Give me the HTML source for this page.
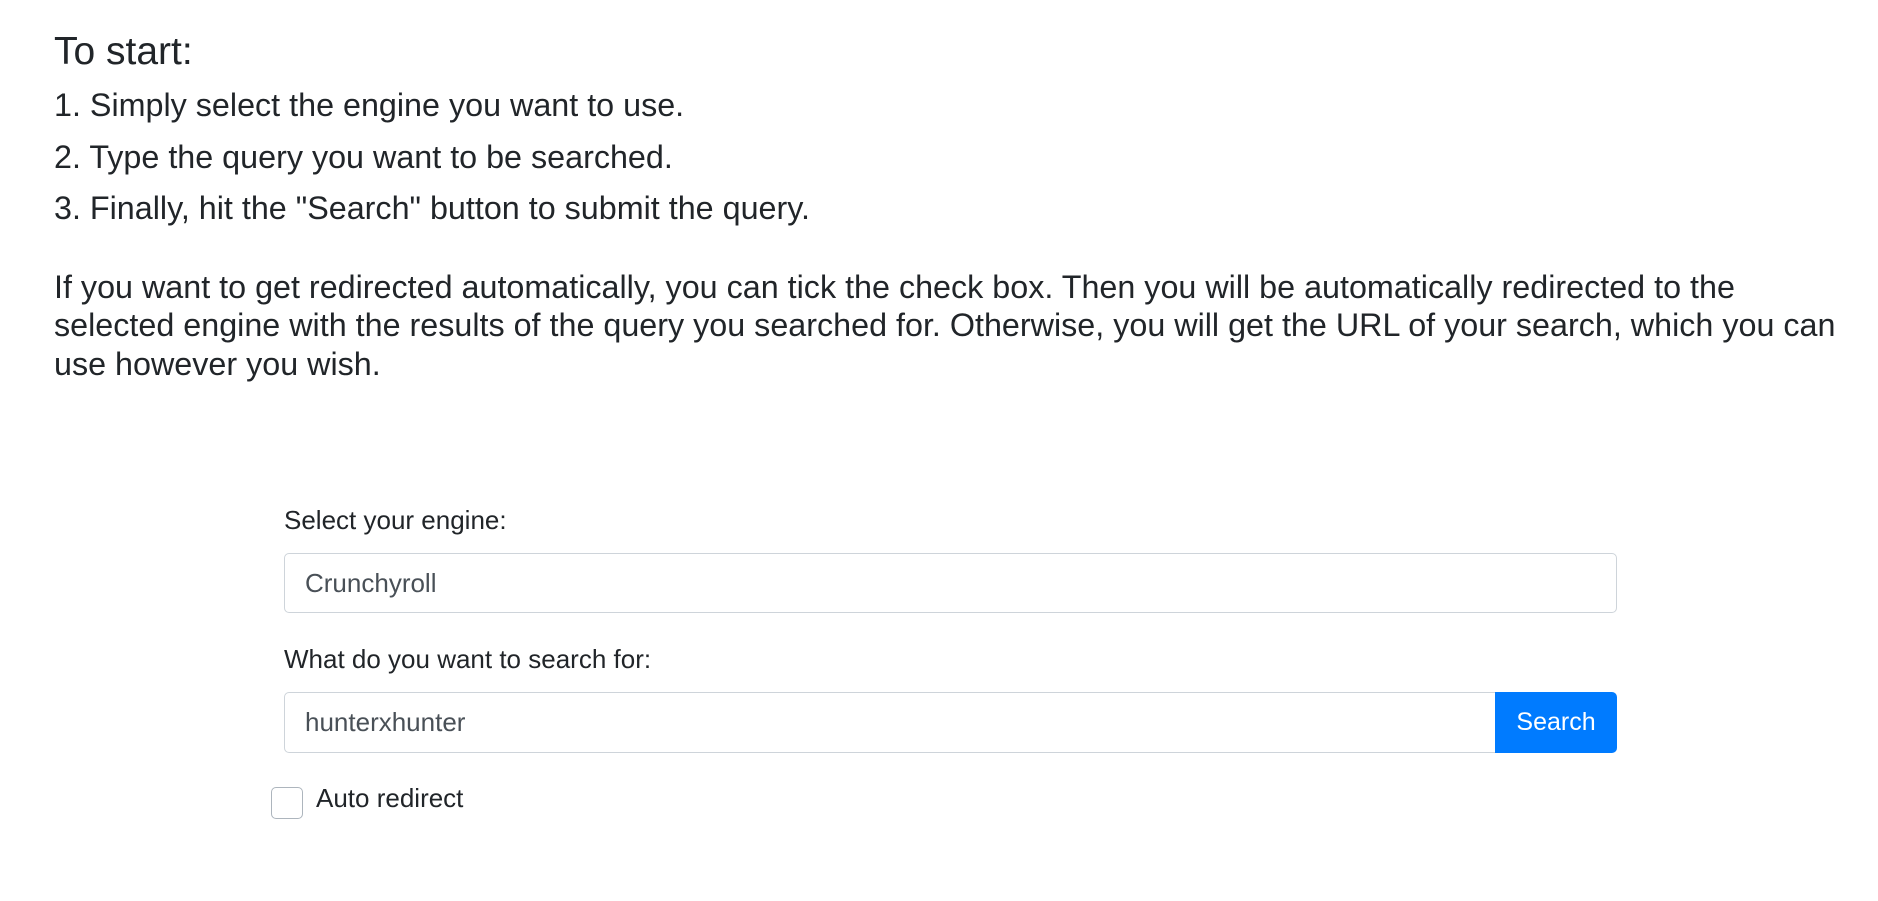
<!DOCTYPE html>
<html><head><meta charset="utf-8"><style>
body{margin:0;background:#fff;font-family:"Liberation Sans",Arial,sans-serif;color:#212529;width:1878px;height:901px;overflow:hidden;position:relative}
.a{position:absolute;white-space:nowrap;line-height:1}
.in{position:absolute;border:1px solid #ced4da;border-radius:5px;box-sizing:border-box;background:#fff}
</style></head><body>
<div class="a" style="left:54px;top:32px;font-size:39px">To start:</div>
<div class="a" style="left:54px;top:89px;font-size:32.3px">1. Simply select the engine you want to use.</div>
<div class="a" style="left:54px;top:141px;font-size:32.3px">2. Type the query you want to be searched.</div>
<div class="a" style="left:54px;top:192px;font-size:32.3px">3. Finally, hit the "Search" button to submit the query.</div>
<div style="position:absolute;left:54px;top:268px;width:1800px;font-size:32.3px;line-height:38.3px">If you want to get redirected automatically, you can tick the check box. Then you will be automatically redirected to the selected engine with the results of the query you searched for. Otherwise, you will get the URL of your search, which you can use however you wish.</div>
<div class="a" style="left:284px;top:507px;font-size:26px">Select your engine:</div>
<div class="in" style="left:284px;top:553px;width:1333px;height:60px"></div>
<div class="a" style="left:305px;top:570px;font-size:26px;color:#495057">Crunchyroll</div>
<div class="a" style="left:284px;top:646px;font-size:26px">What do you want to search for:</div>
<div class="in" style="left:284px;top:692px;width:1220px;height:61px;border-radius:5px 0 0 5px"></div>
<div class="a" style="left:305px;top:709px;font-size:26px;color:#495057">hunterxhunter</div>
<div style="position:absolute;left:1495px;top:692px;width:122px;height:61px;background:#007bff;border-radius:0 5px 5px 0;color:#fff;font-size:25px;line-height:61px;text-align:center">Search</div>
<div style="position:absolute;left:271px;top:787px;width:32px;height:32px;border:1px solid #adb5bd;border-radius:5px;box-sizing:border-box"></div>
<div class="a" style="left:316px;top:785px;font-size:26px">Auto redirect</div>
</body></html>
